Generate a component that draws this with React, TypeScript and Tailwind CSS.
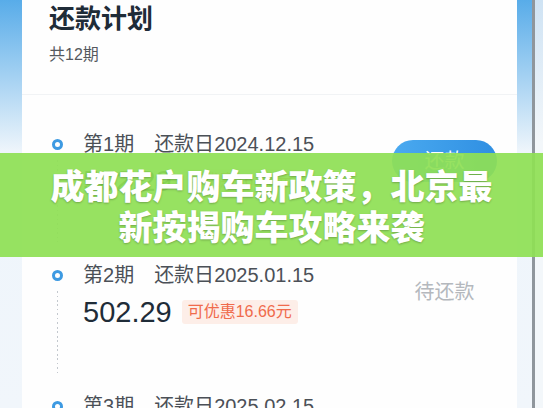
type Period = {
  no: number;
  date: string;
  amount: string;
  discount: string;
  action: 'pay' | 'pending';
};

const periods: Period[] = [
  { no: 1, date: '2024.12.15', amount: '502.29', discount: '16.66', action: 'pay' },
  { no: 2, date: '2025.01.15', amount: '502.29', discount: '16.66', action: 'pending' },
  { no: 3, date: '2025.02.15', amount: '502.29', discount: '16.66', action: 'pending' },
];

function PeriodRow({ p }: { p: Period }) {
  return (
    <div className="flex h-[131px] pl-[30px] pr-[20px]">
      {/* Timeline */}
      <div className="w-[11px] shrink-0 flex flex-col items-center">
        <div className="mt-[8.5px] w-[11px] h-[11px] rounded-full border-[3px] border-[#3d9ae2]" />
        <div className="mt-[10px] h-[82px] w-px bg-[repeating-linear-gradient(to_bottom,#c3c8ce_0px,#c3c8ce_1.5px,transparent_1.5px,transparent_4.5px)]" />
      </div>

      {/* Content */}
      <div className="ml-[20px] flex-1">
        <div className="flex items-center h-[28px] gap-[20px] text-[20px] text-[#4b5057]">
          <span>第{p.no}期</span>
          <span>还款日{p.date}</span>
        </div>
        <div className="mt-[5px] flex items-center h-[36px]">
          <span className="text-[29px] leading-[36px] text-[#1f2c38]">{p.amount}</span>
          <span className="ml-[10px] h-[24px] px-[6px] flex items-center rounded-[3px] bg-[#fdeee8] text-[16px] text-[#f06b4c]">
            可优惠{p.discount}元
          </span>
        </div>
      </div>

      {/* Action */}
      <div className="w-[105px] shrink-0 flex flex-col items-center">
        {p.action === 'pay' ? (
          <div className="mt-[10px] w-[105px] h-[42px] rounded-full bg-linear-to-r from-[#4aaaf0] to-[#2f8fe2] flex items-center justify-center text-[20px] text-white">
            还款
          </div>
        ) : (
          <div className="mt-[17px] h-[28px] leading-[28px] text-[20px] text-[#b4b8bd]">待还款</div>
        )}
      </div>
    </div>
  );
}

export default function App() {
  return (
    <div className="relative w-[543px] h-[408px] overflow-hidden flex bg-[linear-gradient(to_bottom,#58ace9_0%,#eef5fb_37%,#f1f6fb_100%)] font-['Liberation_Sans','Noto_Sans_CJK_SC',sans-serif]">
      <div className="w-[22px] shrink-0" />

      {/* Card */}
      <div className="w-[495px] shrink-0 h-full bg-[#fefefe]">
        <div className="pl-[27px] pt-[3px]">
          <h1 className="text-[26px] leading-[32px] font-bold text-[#1f2c38]">还款计划</h1>
          <p className="mt-[9px] text-[16px] leading-[22px] text-[#55595e]">共12期</p>
        </div>
        <div className="mt-[28px] h-px bg-[#f1f3f5]" />
        <div className="mt-[35px]">
          {periods.map((p) => (
            <PeriodRow key={p.no} p={p} />
          ))}
        </div>
      </div>

      <div className="w-[15px] shrink-0" />
      <div className="w-[3px] shrink-0 bg-[#8f969c]" />
      <div className="flex-1 bg-[linear-gradient(to_bottom,#cfe3f4_0%,#f3f7fa_35%)]" />

      {/* Headline banner */}
      <div className="absolute left-0 right-0 top-[153px] h-[104px] bg-[#8fe055]/[0.93] flex flex-col items-center justify-center text-white text-[34px] leading-[41px] font-black font-['Noto_Sans_CJK_SC',sans-serif] [text-shadow:0_1px_2px_rgba(0,0,0,0.25)]">
        <div>成都花户购车新政策，北京最</div>
        <div>新按揭购车攻略来袭</div>
      </div>
    </div>
  );
}
